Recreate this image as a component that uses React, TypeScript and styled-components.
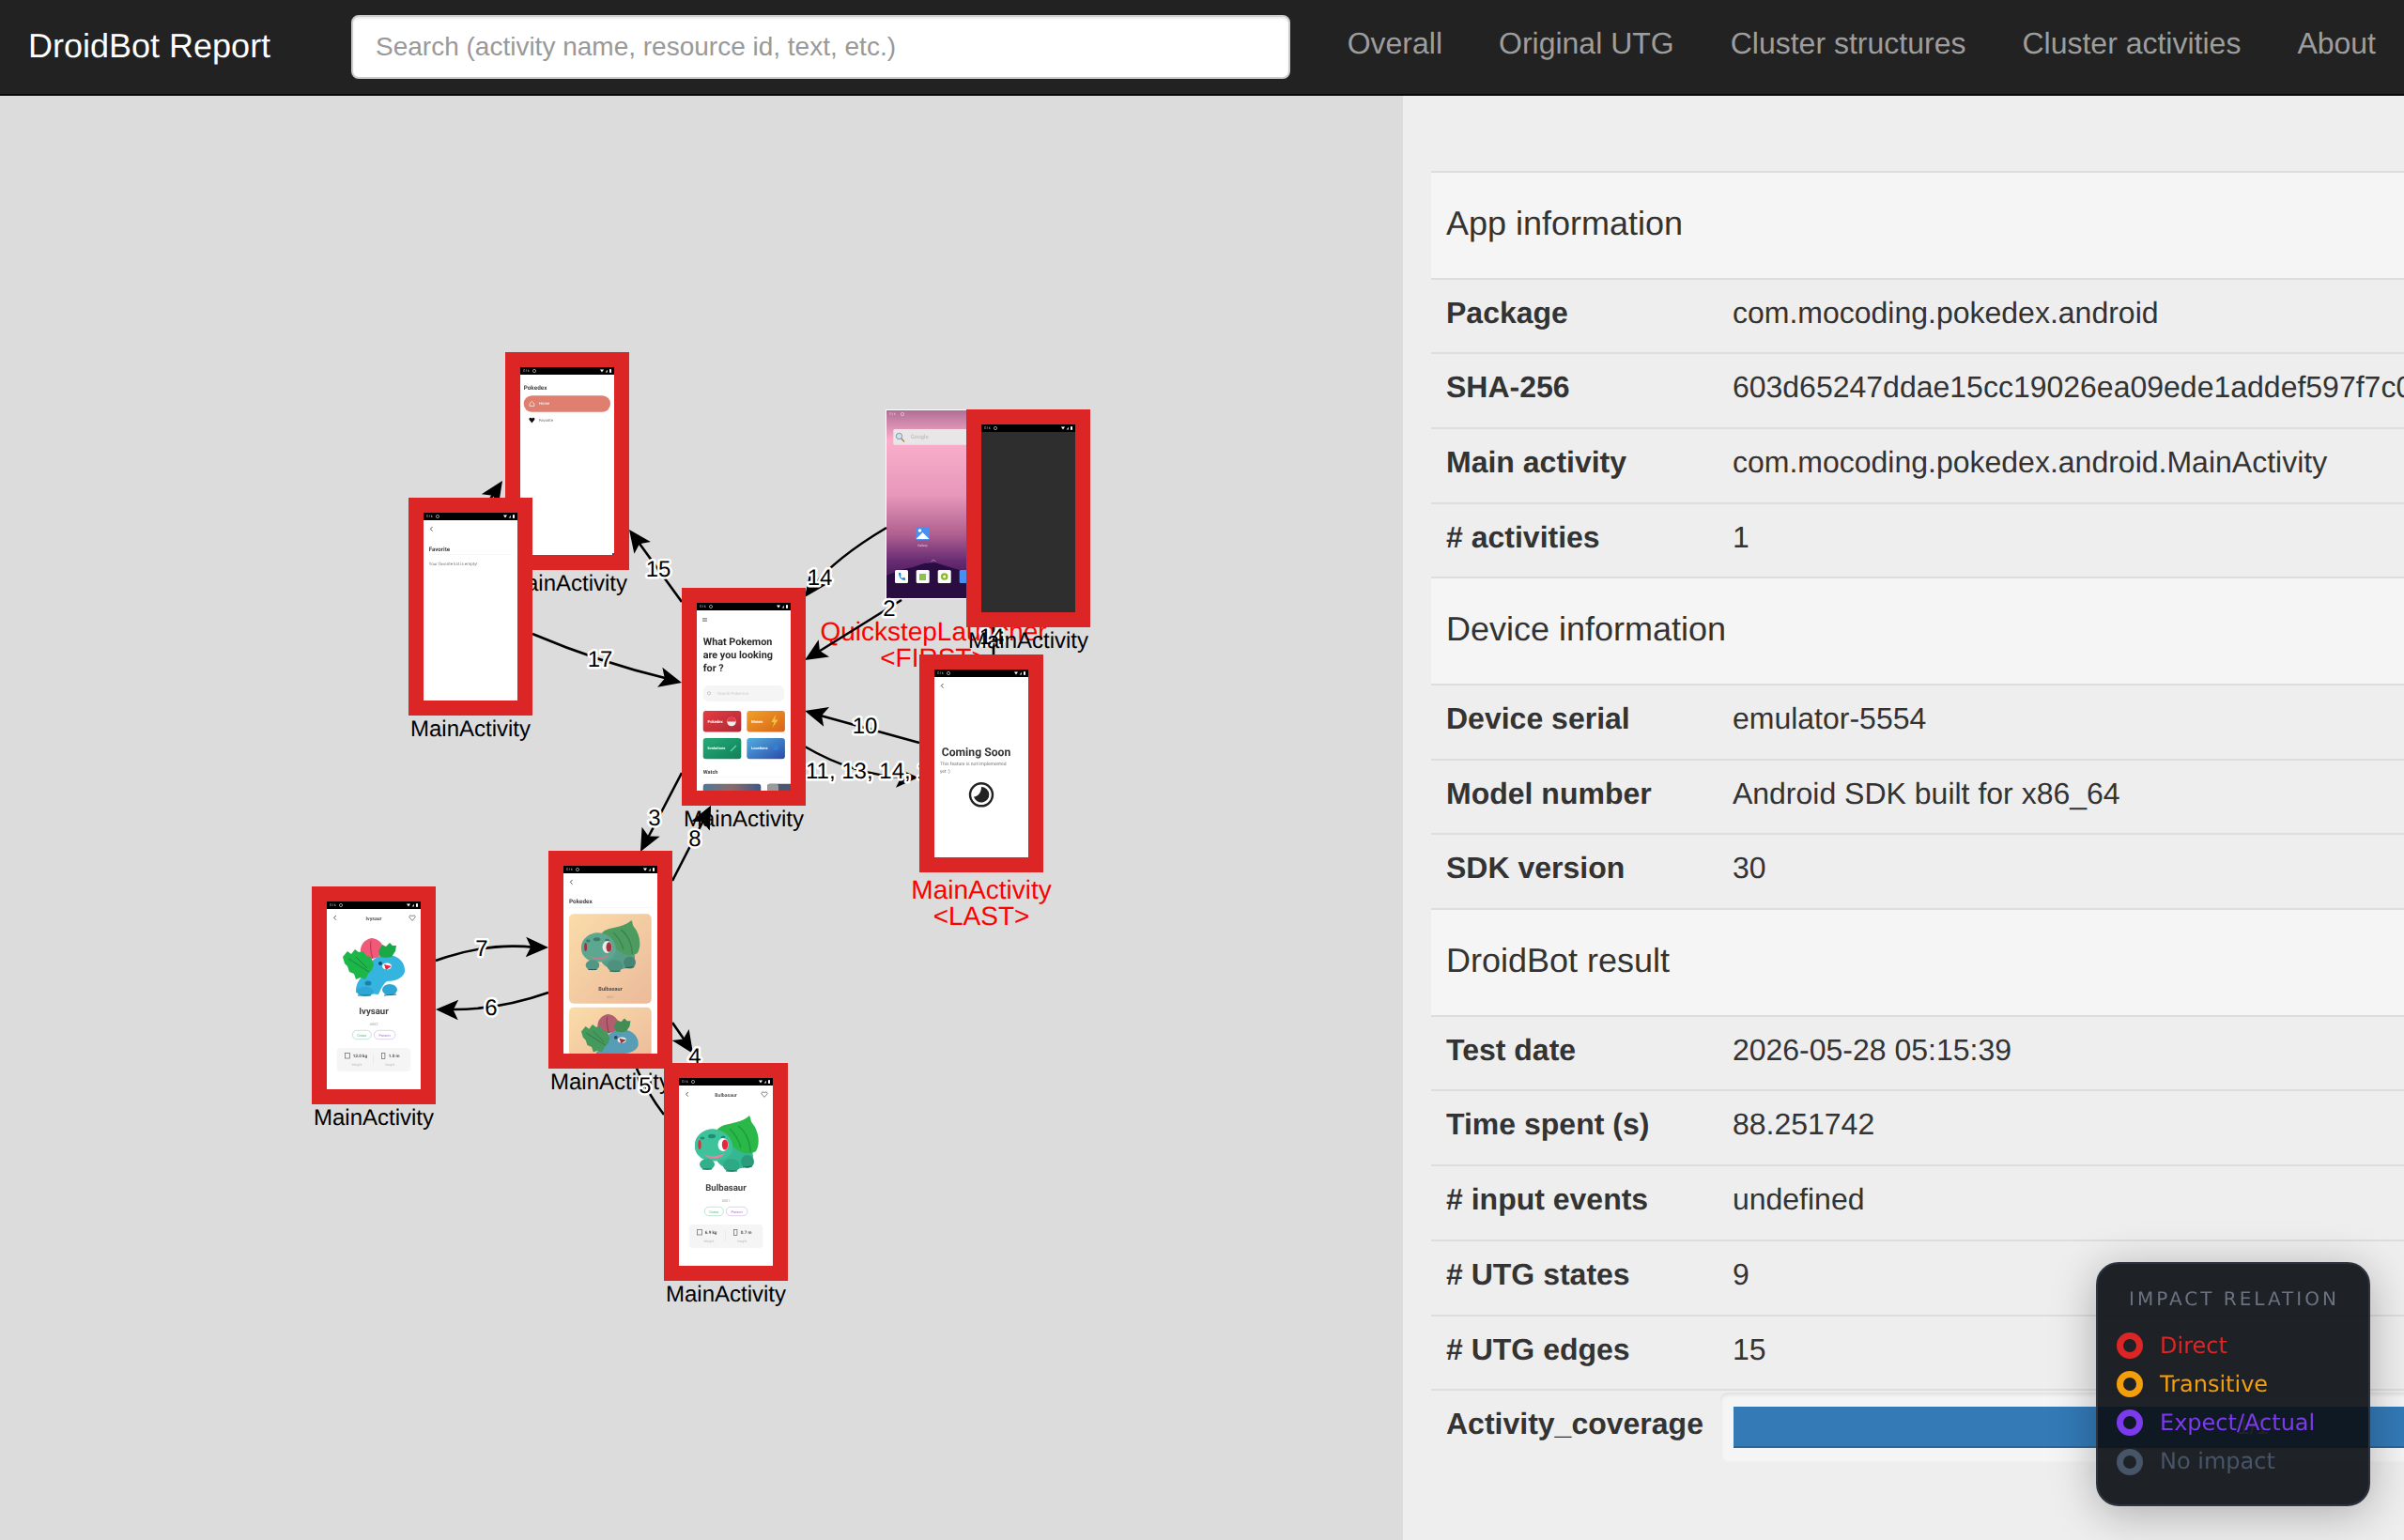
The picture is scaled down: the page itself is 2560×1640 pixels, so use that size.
import React from "react";
import styled, { createGlobalStyle } from "styled-components";

const GlobalStyle = createGlobalStyle`
  html, body {
    margin: 0;
    width: 2560px;
    height: 1640px;
    overflow: hidden;
    background: #eeeeee;
    color: #333333;
    font-family: "Liberation Sans", Arial, sans-serif;
    font-size: 32px;
    line-height: 1.42857;
    text-rendering: geometricPrecision;
  }
  * { box-sizing: border-box; }
`;

const Page = styled.div`
  width: 2560px;
  height: 1640px;
  display: flex;
  flex-direction: column;
  overflow: hidden;
`;

const Navbar = styled.nav`
  flex: 0 0 102px;
  display: flex;
  align-items: flex-start;
  background: #222222;
  border-bottom: 2px solid #080808;
`;

const Brand = styled.a`
  padding: 29px 30px 0;
  width: 374px;
  font-size: 36px;
  line-height: 40px;
  color: #ffffff;
  white-space: nowrap;
`;

const SearchBox = styled.input`
  margin-top: 16px;
  width: 1000px;
  height: 68px;
  padding: 12px 24px;
  font: inherit;
  font-size: 28px;
  line-height: 40px;
  color: #555555;
  background: #ffffff;
  border: 2px solid #cccccc;
  border-radius: 8px;
  box-shadow: inset 0 2px 2px rgba(0, 0, 0, 0.075);
  &::placeholder { color: #999999; opacity: 1; }
`;

const NavList = styled.ul`
  display: flex;
  list-style: none;
  margin: 0 0 0 auto;
  padding: 0;
`;

const NavLink = styled.a`
  display: block;
  padding: 26px 30px;
  font-size: 32px;
  line-height: 40px;
  color: #9d9d9d;
  white-space: nowrap;
`;

const Body = styled.div`
  flex: 1;
  display: flex;
  min-height: 0;
`;

const GraphPanel = styled.section`
  flex: 0 0 1494px;
  background: #dcdcdc;
  overflow: hidden;
`;

const GraphSvg = styled.svg`
  display: block;
  width: 1494px;
  height: 1538px;
`;

const InfoPanel = styled.section`
  flex: 1;
  min-width: 0;
  padding: 80px 0 0 30px;
  overflow: hidden;
  background: #eeeeee;
`;

const InfoTable = styled.table`
  border-collapse: collapse;
  border-spacing: 0;
`;

const SectionCell = styled.th`
  padding: 16px;
  text-align: left;
  font-weight: 400;
  background: #f5f5f5;
  border-top: 2px solid #dddddd;
`;

const SectionTitle = styled.h4`
  margin: 18px 0 22px;
  font-size: 36px;
  font-weight: 400;
  line-height: 1.1;
  color: #333333;
`;

const KeyCell = styled.th`
  padding: 13px 16px 19px;
  text-align: left;
  font-weight: 700;
  white-space: nowrap;
  border-top: 2px solid #dddddd;
`;

const ValueCell = styled.td`
  padding: 13px 16px 19px 15px;
  white-space: nowrap;
  border-top: 2px solid #dddddd;
`;

const ProgressCell = styled.td`
  padding: 0 0 0 2px;
  border-top: 2px solid #dddddd;
`;

const Progress = styled.div`
  padding: 15px 14px;
  background: #f5f5f5;
  border-radius: 8px;
  box-shadow: inset 0 2px 4px rgba(0, 0, 0, 0.1);
`;

const ProgressBar = styled.div<{ $percent: number }>`
  width: ${(p) => p.$percent}%;
  height: 44px;
  font-size: 24px;
  line-height: 44px;
  text-align: center;
  color: #ffffff;
  background: #337ab7;
  box-shadow: inset 0 -2px 0 rgba(0, 0, 0, 0.15);
`;

const Legend = styled.aside`
  position: fixed;
  right: 36px;
  bottom: 36px;
  width: 292px;
  height: 260px;
  padding: 22px 0 0 20px;
  font-family: "DejaVu Sans", sans-serif;
  background: rgba(13, 17, 23, 0.925);
  border: 2px solid #2d3440;
  border-radius: 24px;
  box-shadow: 0 8px 48px rgba(0, 0, 0, 0.28);
`;

const LegendTitle = styled.div`
  margin: 0 0 14px 13px;
  font-size: 20px;
  line-height: 30px;
  letter-spacing: 3px;
  color: #6b7280;
  white-space: nowrap;
`;

const LegendRow = styled.div<{ $color: string }>`
  display: flex;
  align-items: center;
  gap: 18px;
  height: 41.3px;
  font-size: 24px;
  color: ${(p) => p.$color};
`;

const LegendRing = styled.span<{ $color: string }>`
  flex: 0 0 28px;
  height: 28px;
  border: 7px solid ${(p) => p.$color};
  border-radius: 50%;
`;

const EdgeLine = styled.path`
  fill: none;
  stroke: #000000;
  stroke-width: 2.6;
`;

const EdgeLabelText = styled.text`
  font-family: "Liberation Sans", Arial, sans-serif;
  font-size: 24px;
  fill: #000000;
  stroke: #ffffff;
  stroke-width: 5px;
  stroke-linejoin: round;
  paint-order: stroke;
`;

const NodeCaption = styled.text<{ $accent?: boolean }>`
  font-family: "Liberation Sans", Arial, sans-serif;
  font-size: ${(p) => (p.$accent ? 28 : 24)}px;
  text-anchor: middle;
  fill: ${(p) => (p.$accent ? "#ff0000" : "#000000")};
`;

const Ui = styled.text<{ $size: number; $bold?: boolean; $fill?: string; $mid?: boolean }>`
  font-family: Roboto, "Liberation Sans", sans-serif;
  font-size: ${(p) => p.$size}px;
  font-weight: ${(p) => (p.$bold ? 700 : 400)};
  fill: ${(p) => p.$fill ?? "#333333"};
  text-anchor: ${(p) => (p.$mid ? "middle" : "start")};
`;

const Sprite = styled.g<{ $muted?: boolean }>`
  ${(p) => (p.$muted ? "filter: saturate(0.6) brightness(0.92);" : "")}
`;

type Pt = [number, number];

function Arrow({ tip, from, size = 24 }: { tip: Pt; from: Pt; size?: number }) {
  const a = Math.atan2(tip[1] - from[1], tip[0] - from[0]);
  const at = (l: number, w: number) =>
    `${tip[0] - l * Math.cos(a) - w * Math.sin(a)},${tip[1] - l * Math.sin(a) + w * Math.cos(a)}`;
  return (
    <polygon
      points={[`${tip[0]},${tip[1]}`, at(size, size * 0.45), at(size * 0.78, 0), at(size, -size * 0.45)].join(" ")}
      fill="#000000"
    />
  );
}

type EdgeDef = { d: string; tip?: Pt; from?: Pt };

const edges: EdgeDef[] = [
  { d: "M726 641 L676 572", tip: [670, 564], from: [726, 641] },
  { d: "M567 675 Q640 706 712 723", tip: [726, 727], from: [650, 708] },
  { d: "M518 538 L528 522", tip: [535, 512], from: [518, 538] },
  { d: "M944 562 Q890 594 864 626", tip: [857, 636], from: [880, 604] },
  { d: "M960 639 L870 695", tip: [857, 703], from: [960, 639] },
  { d: "M979 791 L870 761", tip: [857, 757], from: [979, 791] },
  { d: "M857 795 Q910 826 965 828", tip: [978, 828], from: [930, 828] },
  { d: "M726 823 L688 896", tip: [682, 907], from: [726, 823] },
  { d: "M716 938 L752 868", tip: [757, 858], from: [716, 938] },
  { d: "M464 1023 Q520 1003 570 1009", tip: [584, 1009], from: [540, 1008] },
  { d: "M584 1057 Q530 1076 478 1075", tip: [464, 1075], from: [510, 1076] },
  { d: "M716 1089 L732 1112", tip: [738, 1122], from: [716, 1089] },
  { d: "M707 1187 Q690 1165 678 1138" },
  { d: "M1058 660 L1058 697" },
];

type LabelDef = { text: string; x: number; y: number; start?: boolean };

const edgeLabels: LabelDef[] = [
  { text: "15", x: 701, y: 614 },
  { text: "17", x: 639, y: 710 },
  { text: "14", x: 873, y: 623 },
  { text: "2", x: 947, y: 656 },
  { text: "10", x: 921, y: 781 },
  { text: "11, 13, 14, 16", x: 858, y: 829, start: true },
  { text: "3", x: 697, y: 879 },
  { text: "8", x: 740, y: 901 },
  { text: "7", x: 513, y: 1018 },
  { text: "6", x: 523, y: 1081 },
  { text: "4", x: 740, y: 1133 },
  { text: "14", x: 1056, y: 686 },
];

function EdgeLabel({ text, x, y, start }: LabelDef) {
  return (
    <EdgeLabelText x={x} y={y} textAnchor={start ? "start" : "middle"}>
      {text}
    </EdgeLabelText>
  );
}

function StatusBar() {
  return (
    <g>
      <rect width="100" height="8" fill="#000000" />
      <Ui x="3" y="5.4" $size={3.4} $fill="#cccccc">5:16</Ui>
      <circle cx="15" cy="4" r="1.6" fill="none" stroke="#cccccc" strokeWidth="0.7" />
      <path d="M85 2.6 L89 2.6 L87 5.4 Z" fill="#ffffff" />
      <path d="M90.5 5.4 L93 5.4 L93 2.8 Z" fill="#cccccc" />
      <rect x="95" y="2.2" width="2" height="3.6" fill="#ffffff" />
    </g>
  );
}

function Chevron({ x = 8.3 }: { x?: number }) {
  return <path d={`M${x + 1.2} 15 L${x - 1} 17.3 L${x + 1.2} 19.6`} fill="none" stroke="#555555" strokeWidth="1" />;
}

function Bulbasaur({ x, y, scale = 1, muted }: { x: number; y: number; scale?: number; muted?: boolean }) {
  return (
    <Sprite transform={`translate(${x} ${y}) scale(${scale})`} $muted={muted}>
      <ellipse cx="42" cy="43" rx="20" ry="14" fill="#35b793" />
      <path d="M23 16 C30 6 46 11 58 0 C60 3 59 6 61 8 C68 16 70 30 65 38 C58 43 47 40 40 32 C34 28 26 24 23 16 Z" fill="#2cb84a" />
      <path d="M46 11 C54 17 59 28 59 39 M37 14 C43 20 47 27 49 34" fill="none" stroke="#1e9a3c" strokeWidth="1.4" />
      <path d="M0 31 C0 20 13 12 24 15 C35 18 41 26 40 36 C39 45 27 50 15 48 C6 47 -1 40 0 31 Z" fill="#3cc29b" />
      <ellipse cx="18" cy="22" rx="4" ry="2.2" fill="#1f8f72" />
      <ellipse cx="8" cy="24" rx="2.4" ry="1.6" fill="#1f8f72" />
      <ellipse cx="30" cy="23" rx="2.4" ry="1.6" fill="#1f8f72" />
      <ellipse cx="30" cy="31" rx="5.5" ry="7" fill="#ffffff" />
      <ellipse cx="32" cy="31" rx="3.2" ry="5.6" fill="#e8273c" />
      <ellipse cx="5" cy="31" rx="1.6" ry="5" fill="#e8273c" />
      <path d="M9 41 C14 44 24 44 32 40 C28 47 15 48 9 41 Z" fill="#ef7fa0" />
      <ellipse cx="13" cy="52" rx="8" ry="6" fill="#31b08c" />
      <ellipse cx="39" cy="53" rx="9" ry="7" fill="#2fa986" />
      <ellipse cx="56" cy="49" rx="7" ry="7" fill="#2a9c7c" />
      <path d="M8 57 L18 57 M33 59 L45 59 M51 55 L61 54" stroke="#167058" strokeWidth="1.2" />
    </Sprite>
  );
}

function Ivysaur({ x, y, scale = 1, muted }: { x: number; y: number; scale?: number; muted?: boolean }) {
  return (
    <Sprite transform={`translate(${x} ${y}) scale(${scale})`} $muted={muted}>
      <path d="M27 36 C26 26 36 17 50 18 C60 19 67 27 66 36 C64 43 55 46 47 46 C42 50 40 56 38 60 L14 58 C13 48 20 40 27 36 Z" fill="#35b4e0" />
      <path d="M19 15 C18 7 24 1 31 0 C38 1 44 6 43 14 C40 23 26 25 19 15 Z" fill="#ee5a78" />
      <path d="M30 3 C29 10 30 16 32 22" fill="none" stroke="#c9345a" strokeWidth="1.2" />
      <path d="M38 14 L42 7 L46 9 L50 5 L53 8 L57 8 L56 14 L52 20 L46 21 L40 20 Z" fill="#1fa846" />
      <path d="M0 20 L5 14 L9 17 L13 12 L17 15 L22 14 L25 19 L30 20 L33 28 L31 34 L27 38 L24 44 L19 42 L14 44 L12 38 L7 36 L5 30 L2 27 Z" fill="#1fb64a" />
      <path d="M6 22 L28 36 M14 20 L26 32" stroke="#13893a" strokeWidth="1" />
      <ellipse cx="47" cy="30" rx="5" ry="3.4" fill="#ffffff" />
      <path d="M44 28 L52 30 L46 34 Z" fill="#e8273c" />
      <circle cx="40" cy="27" r="2" fill="#14506e" />
      <ellipse cx="27" cy="48" rx="3.5" ry="2.6" fill="#1f7fb0" />
      <ellipse cx="24" cy="57" rx="9" ry="5" fill="#2ea6d4" />
      <ellipse cx="50" cy="55" rx="8" ry="6" fill="#2ea6d4" />
      <path d="M16 61 L30 61 M44 61 L57 60" stroke="#146c96" strokeWidth="1.2" />
    </Sprite>
  );
}

function HomeScreen() {
  return (
    <>
      <rect width="100" height="200" fill="#ffffff" />
      <StatusBar />
      <path d="M6 16.6 H11 M6 18 H11 M6 19.4 H11" stroke="#777777" strokeWidth="0.8" />
      <Ui x="6.7" y="45" $size={10.8} $bold $fill="#2b2b2b">What Pokemon</Ui>
      <Ui x="6.7" y="59" $size={10.8} $bold $fill="#2b2b2b">are you looking</Ui>
      <Ui x="6.7" y="72.5" $size={10.8} $bold $fill="#2b2b2b">for ?</Ui>
      <rect x="6.7" y="88" width="86.6" height="17" rx="6" fill="#f5f5f5" />
      <circle cx="13" cy="96.3" r="1.6" fill="none" stroke="#aaaaaa" strokeWidth="0.6" />
      <Ui x="22" y="98.2" $size={4.4} $fill="#cccccc">Search Pokemon</Ui>
      <rect x="6.7" y="115" width="40.6" height="22.5" rx="3" fill="url(#btnRed)" />
      <Ui x="11.5" y="127.5" $size={4.2} $bold $fill="#ffffff">Pokedex</Ui>
      <circle cx="37" cy="126.5" r="4.8" fill="#f0f0f0" />
      <path d="M32.2 126.5 A4.8 4.8 0 0 1 41.8 126.5 Z" fill="#e43b42" />
      <rect x="53.3" y="115" width="40.6" height="22.5" rx="3" fill="url(#btnOrange)" />
      <Ui x="58" y="127.5" $size={4.2} $bold $fill="#ffffff">Moves</Ui>
      <path d="M84 119 L79.5 127 L82.5 127 L80.5 133 L86.5 124.5 L83.2 124.5 Z" fill="#f4c53e" />
      <rect x="6.7" y="144" width="40.6" height="22.3" rx="3" fill="url(#btnGreen)" />
      <Ui x="11.5" y="156" $size={4} $bold $fill="#ffffff">Evolutions</Ui>
      <path d="M36 158 L42 152" stroke="#4fd8a0" strokeWidth="1.6" />
      <rect x="53.3" y="144" width="40.6" height="22.3" rx="3" fill="url(#btnBlue)" />
      <Ui x="58" y="156" $size={4} $bold $fill="#ffffff">Locations</Ui>
      <circle cx="84" cy="154" r="3" fill="#2f7fd8" />
      <Ui x="6.7" y="182" $size={5.6} $bold $fill="#444444">Watch</Ui>
      <rect x="6.7" y="185.4" width="87" height="0.5" fill="#eeeeee" />
      <rect x="6.7" y="192.7" width="61.6" height="10" rx="3" fill="url(#btnPhoto)" />
      <rect x="75" y="192.7" width="30" height="10" rx="3" fill="#4a5870" />
      <rect x="75" y="192.7" width="12" height="10" rx="3" fill="#9a9a9a" />
    </>
  );
}

function DrawerScreen() {
  return (
    <>
      <rect width="100" height="200" fill="#ffffff" />
      <StatusBar />
      <Ui x="3.7" y="24" $size={6.4} $bold $fill="#444444">Pokedex</Ui>
      <rect x="3.7" y="30.3" width="92.3" height="17.4" rx="8.7" fill="#e07f70" />
      <path d="M10 39 L12.4 36.4 L14.8 39 V41.4 H10 Z" fill="none" stroke="#ffffff" strokeWidth="0.7" />
      <Ui x="20" y="40.3" $size={4.2} $fill="#ffffff">Home</Ui>
      <path d="M12.4 59.4 L9.4 55.8 C9 53.8 11.6 53 12.4 54.8 C13.2 53 15.8 53.8 15.4 55.8 Z" fill="#111111" />
      <Ui x="20" y="58" $size={4.2} $fill="#666666">Favorite</Ui>
      <rect x="98" y="198" width="2" height="2" fill="#3a4a7a" />
    </>
  );
}

function FavoriteScreen() {
  return (
    <>
      <rect width="100" height="200" fill="#ffffff" />
      <StatusBar />
      <Chevron />
      <Ui x="5.7" y="40.7" $size={6.2} $bold $fill="#444444">Favorite</Ui>
      <rect x="5.7" y="44" width="88" height="0.5" fill="#eeeeee" />
      <Ui x="5.7" y="56" $size={4.5} $fill="#777777">Your favorite list is empty!</Ui>
    </>
  );
}

function ComingSoonScreen() {
  return (
    <>
      <rect width="100" height="200" fill="#ffffff" />
      <StatusBar />
      <Chevron />
      <Ui x="7.7" y="91.7" $size={12.2} $bold $fill="#333333">Coming Soon</Ui>
      <Ui x="6" y="102.3" $size={5} $fill="#777777">This feature is not implemented</Ui>
      <Ui x="6" y="110" $size={5} $fill="#777777">yet :)</Ui>
      <circle cx="50" cy="133.3" r="12" fill="none" stroke="#222222" strokeWidth="2.4" />
      <path d="M50 125 A8.3 8.3 0 1 1 42 135.5 C47 135 50 131 50 125 Z" fill="#222222" />
    </>
  );
}

function DarkScreen() {
  return (
    <>
      <rect width="100" height="200" fill="#2f2f2f" />
      <StatusBar />
    </>
  );
}

function PokedexScreen() {
  return (
    <>
      <rect width="100" height="200" fill="#ffffff" />
      <StatusBar />
      <Chevron />
      <Ui x="6" y="40" $size={6.4} $bold $fill="#444444">Pokedex</Ui>
      <rect x="6" y="44" width="88" height="0.5" fill="#eeeeee" />
      <rect x="6" y="51.3" width="87.7" height="95.4" rx="5" fill="url(#cardPeach)" />
      <Bulbasaur x={19} y={58} scale={0.92} muted />
      <Ui x="50" y="132.7" $size={5.6} $bold $mid $fill="#554f48">Bulbasaur</Ui>
      <Ui x="50" y="141" $size={3.6} $mid $fill="#b59a85">#001</Ui>
      <rect x="6" y="150.7" width="87.7" height="60" rx="5" fill="url(#cardPeach)" />
      <Ivysaur x={19} y={158} scale={0.92} muted />
    </>
  );
}

type DetailProps = {
  name: string;
  id: string;
  weight: string;
  height: string;
  sprite: React.ReactNode;
};

function DetailScreen({ name, id, weight, height, sprite }: DetailProps) {
  return (
    <>
      <rect width="100" height="200" fill="#ffffff" />
      <StatusBar />
      <Chevron x={8.6} />
      <Ui x="50" y="19.5" $size={5.2} $bold $mid $fill="#555555">{name}</Ui>
      <path d="M91 20.4 L87.8 16.8 C87.4 14.8 90 14.4 91 15.6 C92 14.4 94.6 14.8 94.2 16.8 Z" fill="none" stroke="#555555" strokeWidth="0.7" />
      {sprite}
      <Ui x="50" y="120.3" $size={9.6} $bold $mid $fill="#444444">{name}</Ui>
      <Ui x="50" y="131.7" $size={4} $mid $fill="#aaaaaa">{id}</Ui>
      <rect x="27.3" y="137.3" width="20" height="9.4" rx="4.7" fill="none" stroke="#8fd8b8" strokeWidth="0.6" />
      <Ui x="37.3" y="143.6" $size={3.9} $mid $fill="#5cbd92">Grass</Ui>
      <rect x="50.3" y="137.3" width="22.7" height="9.4" rx="4.7" fill="none" stroke="#cfaee6" strokeWidth="0.6" />
      <Ui x="61.6" y="143.6" $size={3.9} $mid $fill="#a878cc">Poison</Ui>
      <rect x="10.7" y="156" width="78.6" height="25" rx="4" fill="#f5f5f5" />
      <rect x="19.5" y="161.5" width="5" height="5.5" fill="none" stroke="#777777" strokeWidth="0.8" />
      <Ui x="27.7" y="166" $size={4.6} $bold $fill="#555555">{weight}</Ui>
      <Ui x="32" y="175" $size={3.6} $mid $fill="#bbbbbb">Weight</Ui>
      <rect x="49.2" y="162" width="0.4" height="12" fill="#dddddd" />
      <rect x="58.5" y="161.5" width="3.4" height="6" fill="none" stroke="#777777" strokeWidth="0.8" />
      <Ui x="65.7" y="166" $size={4.6} $bold $fill="#555555">{height}</Ui>
      <Ui x="67.3" y="175" $size={3.6} $mid $fill="#bbbbbb">Height</Ui>
    </>
  );
}

function LauncherScreen() {
  const dock = [9, 31.7, 54.7, 77.7];
  return (
    <>
      <rect width="100" height="200" fill="url(#wallpaper)" />
      <Ui x="3" y="5.4" $size={3.4} $fill="#e8d0dc">5:16</Ui>
      <circle cx="17" cy="4" r="1.6" fill="none" stroke="#e8d0dc" strokeWidth="0.7" />
      <rect x="7.3" y="20" width="90" height="16.7" rx="1.5" fill="#e9e6e8" />
      <circle cx="13.5" cy="27.5" r="3.2" fill="#cfe0f4" stroke="#7a8aa0" strokeWidth="0.9" />
      <path d="M15.8 30 L19 33.5" stroke="#b07a4a" strokeWidth="1.3" />
      <Ui x="25.7" y="30" $size={6} $fill="#b4b4b4">Google</Ui>
      <rect x="31.5" y="124" width="14" height="14" rx="1" fill="#4a8ff0" />
      <circle cx="35.5" cy="128" r="1.8" fill="#ffffff" />
      <path d="M31.5 137 L38.5 130 L45.5 137 Z" fill="#ffffff" />
      <Ui x="38.5" y="145" $size={3.4} $mid $fill="#e4d4e4">Gallery</Ui>
      <path d="M47.5 161 L50 159 L52.5 161" fill="none" stroke="#cbb4cf" strokeWidth="0.6" />
      <path d="M0 176 L14 170 L28 167 L40 163 L52 162 L64 166 L78 170 L100 176 V200 H0 Z" fill="#2a1040" />
      {dock.map((x, i) => (
        <rect key={x} x={x} y="170" width="14" height="14" rx="1.5" fill={i === 3 ? "#4a8ff0" : "#fbfbfb"} />
      ))}
      <path d="M13 173 C13 178 16 181 20 181 L20 178.6 L17.8 178 L16.6 179 C15.6 178.2 15 177.4 14.8 176.6 L15.6 175.4 L15 173 Z" fill="#1e88d8" />
      <rect x="35" y="174" width="7" height="7" fill="#8bc34a" />
      <circle cx="61.7" cy="177" r="3.8" fill="#8bb82a" />
      <circle cx="61.7" cy="177" r="1.5" fill="#ffffff" />
    </>
  );
}

type NodeProps = {
  x: number;
  y: number;
  caption?: string[];
  accent?: boolean;
  children: React.ReactNode;
};

function ScreenNode({ x, y, caption = ["MainActivity"], accent, children }: NodeProps) {
  return (
    <g transform={`translate(${x} ${y})`}>
      <rect width="132" height="232" fill="#dc2626" />
      <g transform="translate(16 16)" clipPath="url(#screenClip)">
        <g filter="url(#thumbSoft)">{children}</g>
      </g>
      {caption.map((line, i) => (
        <NodeCaption key={line} $accent={accent} x="66" y={(accent ? 259.5 : 254) + i * 28}>
          {line}
        </NodeCaption>
      ))}
    </g>
  );
}

function UtgGraph() {
  return (
    <GraphSvg viewBox="0 102 1494 1538" xmlns="http://www.w3.org/2000/svg">
      <defs>
        <clipPath id="screenClip">
          <rect width="100" height="200" />
        </clipPath>
        <filter id="thumbSoft" x="-5%" y="-5%" width="110%" height="110%">
          <feGaussianBlur stdDeviation="0.42" />
        </filter>
        <linearGradient id="wallpaper" x1="0" y1="0" x2="0" y2="1">
          <stop offset="0" stopColor="#b06e95" />
          <stop offset="0.16" stopColor="#fbaecb" />
          <stop offset="0.45" stopColor="#e798bb" />
          <stop offset="0.66" stopColor="#b0608f" />
          <stop offset="0.8" stopColor="#6a2c75" />
          <stop offset="1" stopColor="#1c0a38" />
        </linearGradient>
        <linearGradient id="btnRed" x1="0" y1="0" x2="1" y2="1">
          <stop offset="0" stopColor="#e83a40" />
          <stop offset="1" stopColor="#ac2a36" />
        </linearGradient>
        <linearGradient id="btnOrange" x1="0" y1="0" x2="1" y2="1">
          <stop offset="0" stopColor="#f0a028" />
          <stop offset="1" stopColor="#d8641a" />
        </linearGradient>
        <linearGradient id="btnGreen" x1="0" y1="0" x2="1" y2="1">
          <stop offset="0" stopColor="#26ab78" />
          <stop offset="1" stopColor="#108058" />
        </linearGradient>
        <linearGradient id="btnBlue" x1="0" y1="0" x2="1" y2="1">
          <stop offset="0" stopColor="#52aee0" />
          <stop offset="1" stopColor="#2a4aa8" />
        </linearGradient>
        <linearGradient id="btnPhoto" x1="0" y1="0" x2="1" y2="0">
          <stop offset="0" stopColor="#4a7a9a" />
          <stop offset="0.5" stopColor="#8a6a6a" />
          <stop offset="1" stopColor="#3a5a8a" />
        </linearGradient>
        <linearGradient id="cardPeach" x1="0" y1="0" x2="1" y2="1">
          <stop offset="0" stopColor="#fbdcaa" />
          <stop offset="1" stopColor="#ebba9a" />
        </linearGradient>
      </defs>

      <g transform="translate(944 437)">
        <rect x="-1" y="-1" width="102" height="202" fill="#ffffff" />
        <g clipPath="url(#screenClip)">
          <g filter="url(#thumbSoft)">
            <LauncherScreen />
          </g>
        </g>
        <NodeCaption $accent x="50" y="245">QuickstepLauncher</NodeCaption>
        <NodeCaption $accent x="50" y="273">{"<FIRST>"}</NodeCaption>
      </g>

      {edges.map((edge) => (
        <g key={edge.d}>
          <EdgeLine d={edge.d} />
          {edge.tip && edge.from ? <Arrow tip={edge.tip} from={edge.from} /> : null}
        </g>
      ))}
      <polygon points="958,835 964,825 970,831" fill="#000000" />
      {edgeLabels.map((label) => (
        <EdgeLabel key={`${label.text}-${label.x}`} {...label} />
      ))}

      <ScreenNode x={538} y={375}>
        <DrawerScreen />
      </ScreenNode>
      <ScreenNode x={435} y={530}>
        <FavoriteScreen />
      </ScreenNode>
      <ScreenNode x={726} y={626}>
        <HomeScreen />
      </ScreenNode>
      <ScreenNode x={584} y={906}>
        <PokedexScreen />
      </ScreenNode>
      <ScreenNode x={332} y={944}>
        <DetailScreen name="Ivysaur" id="#002" weight="13.0 kg" height="1.0 m" sprite={<Ivysaur x={17} y={39} />} />
      </ScreenNode>
      <ScreenNode x={707} y={1132}>
        <DetailScreen name="Bulbasaur" id="#001" weight="6.9 kg" height="0.7 m" sprite={<Bulbasaur x={17} y={40} />} />
      </ScreenNode>
      <ScreenNode x={979} y={697} caption={["MainActivity", "<LAST>"]} accent>
        <ComingSoonScreen />
      </ScreenNode>
      <ScreenNode x={1029} y={436}>
        <DarkScreen />
      </ScreenNode>

      <Arrow tip={[757, 858]} from={[716, 938]} />
      <EdgeLabel text="5" x={687} y={1164} />
    </GraphSvg>
  );
}

const sections = [
  {
    title: "App information",
    rows: [
      ["Package", "com.mocoding.pokedex.android"],
      ["SHA-256", "603d65247ddae15cc19026ea09ede1addef597f7c03e8a41b6d2f9057ce14a7b"],
      ["Main activity", "com.mocoding.pokedex.android.MainActivity"],
      ["# activities", "1"],
    ],
  },
  {
    title: "Device information",
    rows: [
      ["Device serial", "emulator-5554"],
      ["Model number", "Android SDK built for x86_64"],
      ["SDK version", "30"],
    ],
  },
  {
    title: "DroidBot result",
    rows: [
      ["Test date", "2026-05-28 05:15:39"],
      ["Time spent (s)", "88.251742"],
      ["# input events", "undefined"],
      ["# UTG states", "9"],
      ["# UTG edges", "15"],
    ],
  },
];

const navLinks = ["Overall", "Original UTG", "Cluster structures", "Cluster activities", "About"];

const legendItems = [
  { label: "Direct", color: "#dc2626" },
  { label: "Transitive", color: "#f59e0b" },
  { label: "Expect/Actual", color: "#7c3aed" },
  { label: "No impact", color: "#475569" },
];

export default function App() {
  return (
    <Page>
      <GlobalStyle />
      <Navbar>
        <Brand>DroidBot Report</Brand>
        <SearchBox placeholder="Search (activity name, resource id, text, etc.)" />
        <NavList>
          {navLinks.map((link) => (
            <li key={link}>
              <NavLink>{link}</NavLink>
            </li>
          ))}
        </NavList>
      </Navbar>
      <Body>
        <GraphPanel>
          <UtgGraph />
        </GraphPanel>
        <InfoPanel>
          <InfoTable>
            <tbody>
              {sections.map((section) => (
                <React.Fragment key={section.title}>
                  <tr>
                    <SectionCell colSpan={2}>
                      <SectionTitle>{section.title}</SectionTitle>
                    </SectionCell>
                  </tr>
                  {section.rows.map(([key, value]) => (
                    <tr key={key}>
                      <KeyCell>{key}</KeyCell>
                      <ValueCell>{value}</ValueCell>
                    </tr>
                  ))}
                </React.Fragment>
              ))}
              <tr>
                <KeyCell>Activity_coverage</KeyCell>
                <ProgressCell>
                  <Progress>
                    <ProgressBar $percent={100}>1/1</ProgressBar>
                  </Progress>
                </ProgressCell>
              </tr>
            </tbody>
          </InfoTable>
        </InfoPanel>
      </Body>
      <Legend>
        <LegendTitle>IMPACT RELATION</LegendTitle>
        {legendItems.map((item) => (
          <LegendRow key={item.label} $color={item.color}>
            <LegendRing $color={item.color} />
            {item.label}
          </LegendRow>
        ))}
      </Legend>
    </Page>
  );
}
